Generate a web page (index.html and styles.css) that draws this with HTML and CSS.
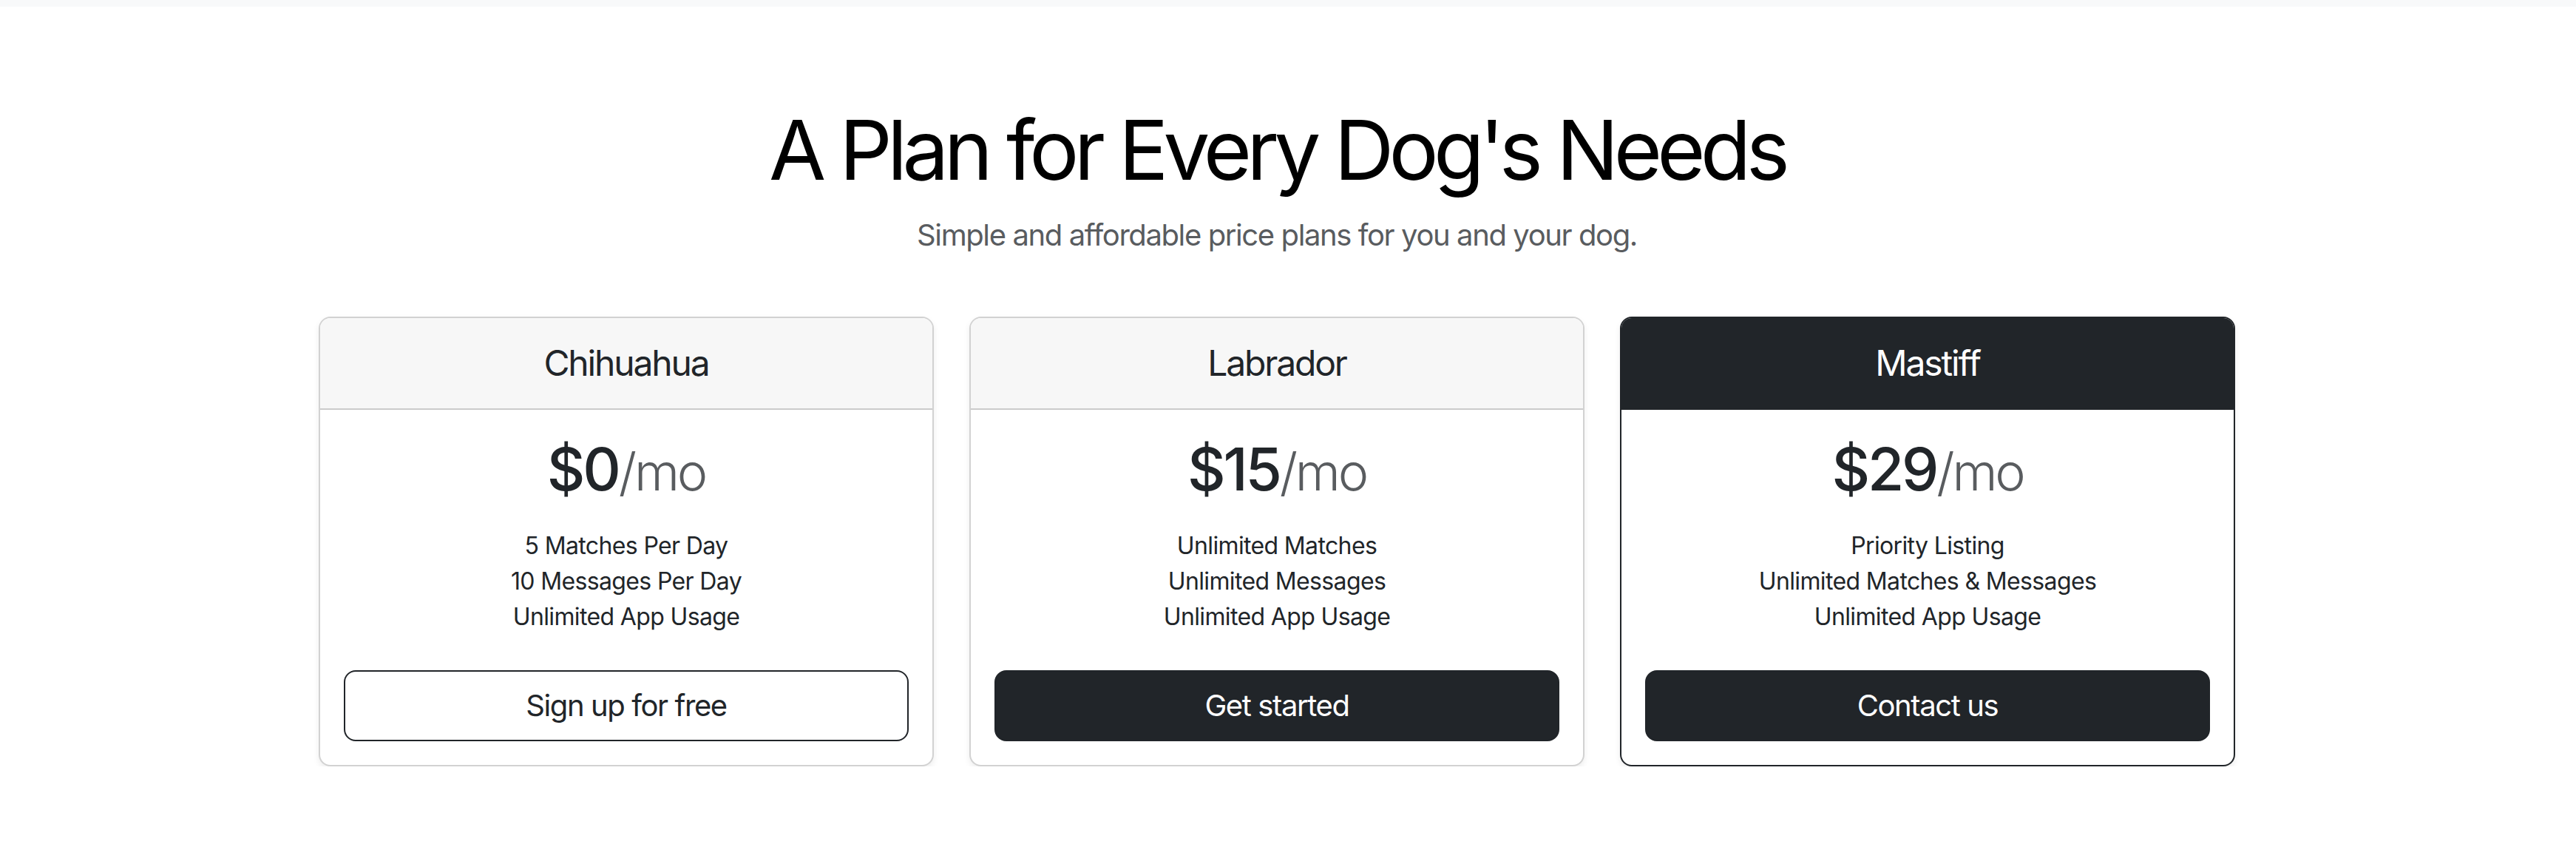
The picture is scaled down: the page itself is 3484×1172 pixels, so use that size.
FILE: index.html
```html
<!DOCTYPE html>
<html lang="en">
<head>
<meta charset="utf-8">
<title>Pricing</title>
<link rel="stylesheet" href="styles.css">
</head>
<body>
<div class="topbar"></div>
<main class="page">
  <div class="container">
    <header class="pricing-header">
      <h1 class="title">A Plan for Every Dog's Needs</h1>
      <p class="lead">Simple and affordable price plans for you and your dog.</p>
    </header>
    <div class="plans">
      <div class="card">
        <div class="card-header"><h4>Chihuahua</h4></div>
        <div class="card-body">
          <h1 class="price">$0<small>/mo</small></h1>
          <ul class="features">
            <li>5 Matches Per Day</li>
            <li>10 Messages Per Day</li>
            <li>Unlimited App Usage</li>
          </ul>
          <button type="button" class="btn btn-outline">Sign up for free</button>
        </div>
      </div>
      <div class="card">
        <div class="card-header"><h4>Labrador</h4></div>
        <div class="card-body">
          <h1 class="price">$15<small>/mo</small></h1>
          <ul class="features">
            <li>Unlimited Matches</li>
            <li>Unlimited Messages</li>
            <li>Unlimited App Usage</li>
          </ul>
          <button type="button" class="btn btn-dark">Get started</button>
        </div>
      </div>
      <div class="card card-featured">
        <div class="card-header"><h4>Mastiff</h4></div>
        <div class="card-body">
          <h1 class="price">$29<small>/mo</small></h1>
          <ul class="features">
            <li>Priority Listing</li>
            <li>Unlimited Matches &amp; Messages</li>
            <li>Unlimited App Usage</li>
          </ul>
          <button type="button" class="btn btn-dark">Contact us</button>
        </div>
      </div>
    </div>
  </div>
</main>
</body>
</html>
```
FILE: styles.css
```css
* { box-sizing: border-box; }
body {
  margin: 0;
  font-family: Inter, "Noto Sans", "Liberation Sans", sans-serif;
  color: #212529;
  background: #fff;
}
.topbar { height: 9px; background: #f8f9fa; }
.page { width: 3454px; }
.container { width: 2640px; margin: 0 auto; padding: 0 24px; }
.pricing-header { padding-top: 126px; padding-bottom: 48px; text-align: center; }
.title {
  margin: 0 0 19px;
  font-size: 112px;
  font-weight: 400;
  line-height: 1.2;
  letter-spacing: -0.06em;
  color: #000;
}
.lead {
  margin: 0 0 32px;
  font-size: 40px;
  line-height: 1.5;
  letter-spacing: -0.035em;
  color: #595c5f;
}
.plans {
  display: grid;
  grid-template-columns: repeat(3, 1fr);
  gap: 48px;
  text-align: center;
}
.card {
  border: 2px solid rgba(0, 0, 0, .175);
  border-radius: 16px;
  box-shadow: 0 4px 8px rgba(0, 0, 0, .075);
  overflow: hidden;
  background: #fff;
  display: flex;
  flex-direction: column;
}
.card-header {
  padding: 32px;
  background: #f7f7f7;
  border-bottom: 2px solid rgba(0, 0, 0, .175);
}
.card-header h4 {
  margin: 0;
  font-size: 48px;
  font-weight: 400;
  line-height: 1.2;
  letter-spacing: -0.045em;
}
.card-body { padding: 32px; }
.price {
  margin: 0;
  font-size: 80px;
  font-weight: 500;
  line-height: 1.2;
  letter-spacing: -0.04em;
}
.price small { font-size: .875em; font-weight: 300; color: #595c5f; }
.features {
  list-style: none;
  margin: 32px 0 48px;
  padding: 0;
  font-size: 32px;
  line-height: 1.5;
  letter-spacing: -0.02em;
}
.btn {
  display: block;
  width: 100%;
  padding: 16px 32px;
  font-family: inherit;
  font-size: 40px;
  line-height: 1.5;
  letter-spacing: -0.035em;
  border: 2px solid #212529;
  border-radius: 16px;
  cursor: pointer;
}
.btn-outline { background: #fff; color: #212529; }
.btn-dark { background: #212529; color: #fff; }
.card-featured { border-color: #212529; }
.card-featured .card-header { background: #212529; color: #fff; border-bottom-color: #212529; }
```
